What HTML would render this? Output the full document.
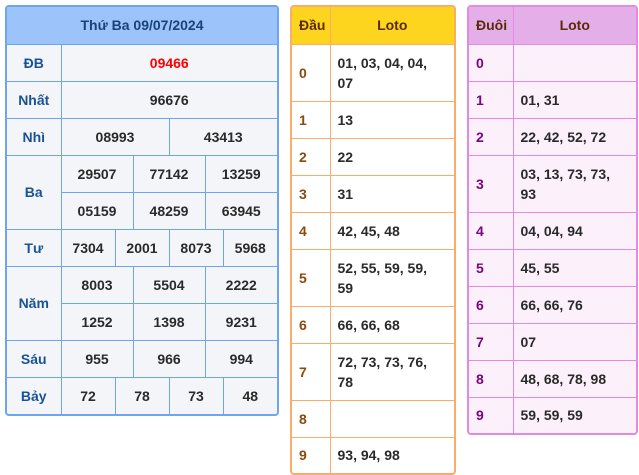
<!DOCTYPE html>
<html><head><meta charset="utf-8"><style>
*{box-sizing:border-box;margin:0;padding:0}
body{width:639px;height:475px;background:#fff;font-family:"Liberation Sans",sans-serif;font-weight:bold;font-size:14px;color:#2a2a2a;position:relative;overflow:hidden}
.box{position:absolute;border-radius:4px;overflow:hidden}
table{border-collapse:collapse;width:100%;table-layout:fixed}
td,th{padding:0}
#L{left:5px;top:5px;width:274px;border:2px solid #6ea5ef;background:#f3f5f9}
#L td,#L th{border:1px solid #6ea5ef;text-align:center;height:37px}
#L tr:first-child th{border-top:none}
#L td:first-child{border-left:none}
#L td:last-child{border-right:none}
#L tr:last-child td{border-bottom:none}
#L th{background:#9dc3fb;color:#17447a;border-left:none;border-right:none}
#L .lb{color:#1a5296}
#M{left:290px;top:5px;width:166px;border:2px solid #f8ad6a;background:#fff}
#R{left:467px;top:5px;width:171px;border:2px solid #e48ae0;background:#fcf0fb}
#M td,#M th{border:1px solid #f8ad6a;text-align:left;padding-left:7px;line-height:20px}
#R td,#R th{border:1px solid #e48ae0;text-align:left;padding-left:7px;line-height:20px}
#M th,#R th{height:37px;color:#5a2a0a;border-top:none}
#M th:nth-child(2),#R th:nth-child(2){text-align:center;padding-left:0}
#M th{background:#fdd51f}
#R th{background:#e4aee8}
#M td:first-child,#M th:first-child,#R td:first-child,#R th:first-child{border-left:none}
#M td:last-child,#M th:last-child,#R td:last-child,#R th:last-child{border-right:none}
#M tr:last-child td,#R tr:last-child td{border-bottom:none}
#M td:first-child{color:#8b4a0c}
#R td:first-child{color:#7b0580}
.h1 td{height:37px}.h2 td{height:57px}
#M .h1:last-child td,#R .h1:last-child td{height:36px}
</style></head><body>
<div class="box" id="L"><table>
<colgroup><col style="width:54px"><col span="12"></colgroup>
<tr><th colspan="13">Thứ Ba 09/07/2024</th></tr>
<tr><td class="lb">ĐB</td><td colspan="12" style="color:#f00">09466</td></tr>
<tr><td class="lb">Nhất</td><td colspan="12">96676</td></tr>
<tr><td class="lb">Nhì</td><td colspan="6">08993</td><td colspan="6">43413</td></tr>
<tr><td class="lb" rowspan="2">Ba</td><td colspan="4">29507</td><td colspan="4">77142</td><td colspan="4">13259</td></tr>
<tr><td colspan="4">05159</td><td colspan="4">48259</td><td colspan="4">63945</td></tr>
<tr><td class="lb">Tư</td><td colspan="3">7304</td><td colspan="3">2001</td><td colspan="3">8073</td><td colspan="3">5968</td></tr>
<tr><td class="lb" rowspan="2">Năm</td><td colspan="4">8003</td><td colspan="4">5504</td><td colspan="4">2222</td></tr>
<tr><td colspan="4">1252</td><td colspan="4">1398</td><td colspan="4">9231</td></tr>
<tr><td class="lb">Sáu</td><td colspan="4">955</td><td colspan="4">966</td><td colspan="4">994</td></tr>
<tr><td class="lb">Bảy</td><td colspan="3">72</td><td colspan="3">78</td><td colspan="3">73</td><td colspan="3">48</td></tr>
</table></div>
<div class="box" id="M"><table>
<colgroup><col style="width:38px"><col></colgroup>
<tr><th>Đầu</th><th>Loto</th></tr>
<tr class="h2"><td>0</td><td>01, 03, 04, 04,<br>07</td></tr>
<tr class="h1"><td>1</td><td>13</td></tr>
<tr class="h1"><td>2</td><td>22</td></tr>
<tr class="h1"><td>3</td><td>31</td></tr>
<tr class="h1"><td>4</td><td>42, 45, 48</td></tr>
<tr class="h2"><td>5</td><td>52, 55, 59, 59,<br>59</td></tr>
<tr class="h1"><td>6</td><td>66, 66, 68</td></tr>
<tr class="h2"><td>7</td><td>72, 73, 73, 76,<br>78</td></tr>
<tr class="h1"><td>8</td><td></td></tr>
<tr class="h1"><td>9</td><td>93, 94, 98</td></tr>
</table></div>
<div class="box" id="R"><table>
<colgroup><col style="width:44px"><col></colgroup>
<tr><th>Đuôi</th><th>Loto</th></tr>
<tr class="h1"><td>0</td><td></td></tr>
<tr class="h1"><td>1</td><td>01, 31</td></tr>
<tr class="h1"><td>2</td><td>22, 42, 52, 72</td></tr>
<tr class="h2"><td>3</td><td>03, 13, 73, 73,<br>93</td></tr>
<tr class="h1"><td>4</td><td>04, 04, 94</td></tr>
<tr class="h1"><td>5</td><td>45, 55</td></tr>
<tr class="h1"><td>6</td><td>66, 66, 76</td></tr>
<tr class="h1"><td>7</td><td>07</td></tr>
<tr class="h1"><td>8</td><td>48, 68, 78, 98</td></tr>
<tr class="h1"><td>9</td><td>59, 59, 59</td></tr>
</table></div>
</body></html>
